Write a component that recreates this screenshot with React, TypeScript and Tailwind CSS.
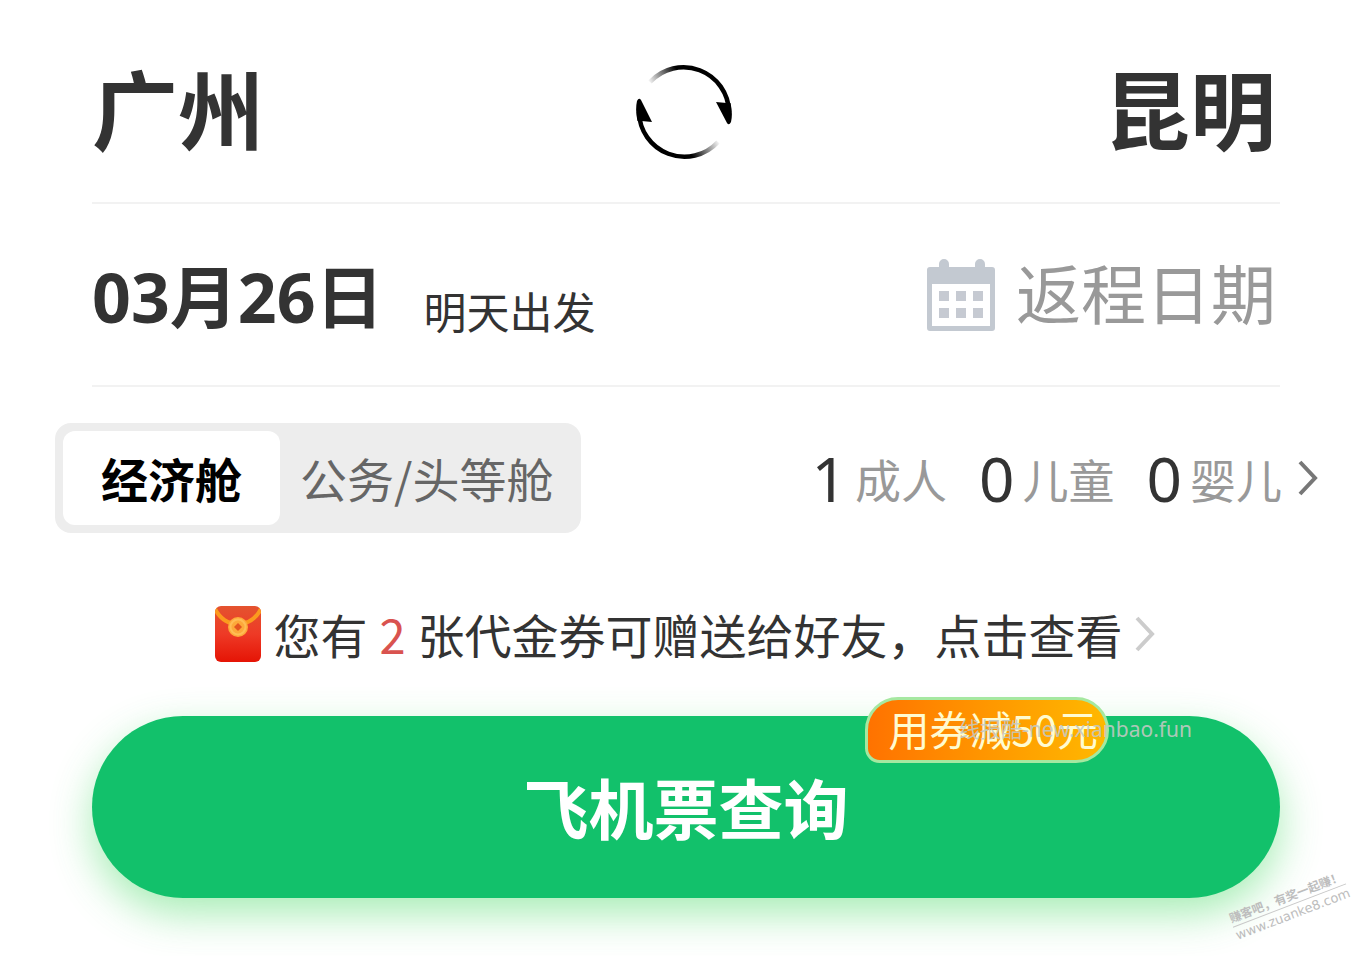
import { useState } from "react";

function SwapIcon() {
  return (
    <svg viewBox="0 0 96 96" className="size-24" fill="none" aria-hidden="true">
      <defs>
        <linearGradient id="arcTop" gradientUnits="userSpaceOnUse" x1="12" y1="18" x2="40" y2="4">
          <stop offset="0" stopColor="#000" stopOpacity="0" />
          <stop offset="1" stopColor="#000" />
        </linearGradient>
        <linearGradient id="arcBottom" gradientUnits="userSpaceOnUse" x1="84" y1="78" x2="56" y2="92">
          <stop offset="0" stopColor="#000" stopOpacity="0" />
          <stop offset="1" stopColor="#000" />
        </linearGradient>
      </defs>
      <path d="M14 18A45.500 45.500 0 0 1 93 48" stroke="url(#arcTop)" strokeWidth="4.500" />
      <path d="M82 78A45.500 45.500 0 0 1 3 48" stroke="url(#arcBottom)" strokeWidth="4.500" />
      <path d="M80 38L90.500 39L94.500 39Q97 50 95 58Q93 62 91 59Z" fill="#000" />
      <path d="M16 58L5.500 57L1.500 57Q-1 46 1 37Q3 33 5 36Z" fill="#000" />
    </svg>
  );
}

function CalendarIcon() {
  return (
    <svg viewBox="0 0 70 72" className="h-[72px] w-[70px]" aria-hidden="true">
      <path
        fill="#c3c9d1"
        fillRule="evenodd"
        d="M4 8H13V5a5 5 0 0 1 10 0V8H49V5a5 5 0 0 1 10 0V8H66a3 3 0 0 1 3 3V69a3 3 0 0 1-3 3H4a3 3 0 0 1-3-3V11a3 3 0 0 1 3-3ZM6 25V67H64V25Z"
      />
      <path fill="#c6cad2" d="M13 32h10v10h-10zM30 32h10v10h-10zM47 32h10v10h-10zM13 49h10v10h-10zM30 49h10v10h-10zM47 49h10v10h-10z" />
    </svg>
  );
}

function RedPacketIcon() {
  return (
    <svg viewBox="0 0 46 56" className="h-14 w-[46px]" aria-hidden="true">
      <defs>
        <linearGradient id="packet" x1="0" y1="0" x2="0" y2="1">
          <stop offset="0" stopColor="#e4532f" />
          <stop offset="0.500" stopColor="#ee3a26" />
          <stop offset="1" stopColor="#e51405" />
        </linearGradient>
        <clipPath id="packetClip">
          <rect width="46" height="56" rx="6" />
        </clipPath>
      </defs>
      <g clipPath="url(#packetClip)">
        <rect width="46" height="56" fill="url(#packet)" />
        <path d="M0 3Q8 18 23 18T46 3" fill="none" stroke="#fb9a1e" strokeWidth="4" />
        <circle cx="23" cy="21" r="10" fill="#fda93a" />
        <circle cx="23" cy="21" r="7.500" fill="none" stroke="#ffbd55" strokeWidth="2" />
        <path d="M23 17l4 4-4 4-4-4z" fill="#e4561f" />
      </g>
    </svg>
  );
}

function Chevron({ className }: { className: string }) {
  return (
    <svg viewBox="0 0 20 38" className={className} fill="none" stroke="currentColor" strokeWidth="4" aria-hidden="true">
      <path d="M2 3L17 19L2 35" />
    </svg>
  );
}

const cabins = ["经济舱", "公务/头等舱"];
const passengers = [
  { count: 1, label: "成人" },
  { count: 0, label: "儿童" },
  { count: 0, label: "婴儿" },
];

export default function App() {
  const [cabin, setCabin] = useState(0);

  return (
    <main className="relative overflow-hidden bg-white pb-[58px] font-['Noto_Sans_CJK_SC',sans-serif] text-[#333]">
      <section className="mr-[90px] ml-[92px] flex items-center justify-between border-b-2 border-[#f2f2f2] pt-[52px] pb-[30px]">
        <button className="pb-2.5 text-[86px] leading-[110px] font-bold">广州</button>
        <button aria-label="交换出发地和目的地">
          <SwapIcon />
        </button>
        <button className="pr-1 pb-2.5 text-[86px] leading-[110px] font-bold">昆明</button>
      </section>

      <section className="mr-[90px] ml-[92px] flex items-center justify-between border-b-2 border-[#f2f2f2] pt-[42px] pb-[41px]">
        <button className="flex items-end gap-10">
          <span className="pt-1 font-['Noto_Sans','Noto_Sans_CJK_SC',sans-serif] text-[68px] leading-[94px] font-bold">
            03月26日
          </span>
          <span className="pb-1 text-[43px] leading-[60px]">明天出发</span>
        </button>
        <button className="flex items-center gap-5 pr-1 text-[65px] text-[#999]">
          <CalendarIcon />
          <span className="pb-2 leading-[88px]">返程日期</span>
        </button>
      </section>

      <section className="mt-9 mr-[52px] ml-[55px] flex items-center justify-between">
        <div className="flex rounded-2xl bg-[#ededed] p-2 text-[47px] leading-[94px]">
          {cabins.map((name, i) => (
            <button
              key={name}
              aria-pressed={cabin === i}
              onClick={() => setCabin(i)}
              className={
                cabin === i
                  ? "rounded-xl bg-white px-[38px] font-bold text-black"
                  : "px-5 text-[#666]"
              }
            >
              {name}
            </button>
          ))}
        </div>
        <button className="flex items-center gap-8">
          {passengers.map((p) => (
            <span key={p.label} className="flex items-center gap-2">
              <span className="font-['Noto_Sans',sans-serif] text-[62px] leading-[90px]">{p.count}</span>
              <span className="text-[46px] leading-[80px] text-[#999]">{p.label}</span>
            </span>
          ))}
          <Chevron className="-ml-4 h-[38px] w-5 text-[#777]" />
        </button>
      </section>

      <a href="#vouchers" className="mt-[65px] flex items-center justify-center gap-3 text-[47px] leading-[72px]">
        <RedPacketIcon />
        <span className="flex gap-3">
          <span>您有</span>
          <span className="text-[#d9534f]">2</span>
          <span>张代金券可赠送给好友，点击查看</span>
        </span>
        <Chevron className="h-[38px] w-5 text-[#ccc]" />
      </a>

      <div className="relative mr-[90px] ml-[92px] mt-[46px]">
        <button className="w-full rounded-full bg-[#12c16b] pt-[42px] pb-11 text-[65px] leading-[96px] font-bold text-white shadow-[0_16px_40px_rgba(60,215,90,0.450)]">
          飞机票查询
        </button>
        <span className="absolute -top-[19px] right-[171px] rounded-[36px] rounded-bl-2xl border-[3px] border-[#a5e8a0] bg-linear-to-r from-[#ff7200] to-[#ffb800] pr-2 pb-1 pl-5 text-[41px] leading-[56px] text-[#fffbd0]">
          用券减50元
        </span>
        <span className="absolute top-0 right-[88px] font-['Noto_Sans','Noto_Sans_CJK_SC',sans-serif] text-[21px] leading-[26px] text-[#c3c9c3]/90">
          线报酷-new.xianbao.fun
        </span>
      </div>

      <div className="absolute right-[20px] bottom-[32px] -rotate-[21deg] text-[#bdbdbd]">
        <p className="border-b border-[#c8c8c8] text-[12px] leading-[18px] font-bold">赚客吧，有奖一起赚！</p>
        <p className="font-['DejaVu_Sans',sans-serif] text-[13px] leading-[18px] font-medium">www.zuanke8.com</p>
      </div>
    </main>
  );
}
